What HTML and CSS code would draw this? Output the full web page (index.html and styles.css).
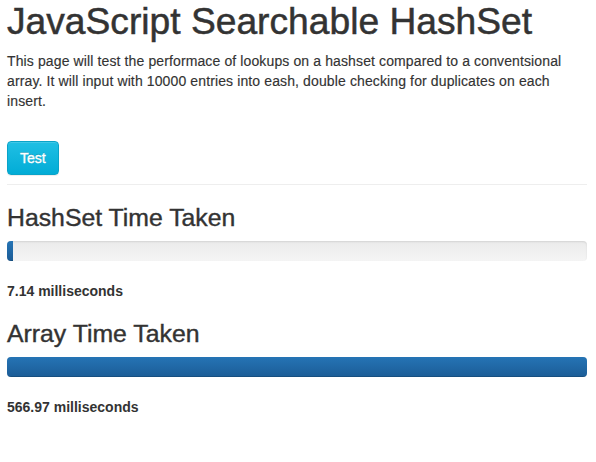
FILE: index.html
```html
<!DOCTYPE html>
<html>
<head>
<meta charset="utf-8">
<title>JavaScript Searchable HashSet</title>
<link rel="stylesheet" href="styles.css">
</head>
<body>
<div class="container">
  <h1 class="title">JavaScript Searchable HashSet</h1>
  <p class="lead-text">This page will test the performace of lookups on a hashset compared to a conventsional array. It will input with 10000 entries into eash, double checking for duplicates on each insert.</p>
  <div class="actions"><button class="btn btn-info" type="button">Test</button></div>
  <hr class="divider">
  <section class="result">
    <h2 class="result-title">HashSet Time Taken</h2>
    <div class="progress"><div class="progress-bar" style="width:1.1%"></div></div>
    <p class="result-time">7.14 milliseconds</p>
  </section>
  <section class="result">
    <h2 class="result-title">Array Time Taken</h2>
    <div class="progress"><div class="progress-bar" style="width:100%"></div></div>
    <p class="result-time">566.97 milliseconds</p>
  </section>
</div>
</body>
</html>
```
FILE: styles.css
```css
html, body {
  margin: 0;
  padding: 0;
  background: #ffffff;
}
body {
  font-family: "Liberation Sans", Arial, Helvetica, sans-serif;
  font-size: 14px;
  line-height: 20px;
  color: #333333;
}
.container {
  padding: 1px 9px 0 7px;
}
.title {
  font-size: 37.2px;
  font-weight: normal;
  line-height: 40px;
  margin: 0 0 10px;
  color: #333333;
  -webkit-text-stroke: 0.5px #333333;
}
.lead-text {
  margin: 0;
  letter-spacing: 0.12px;
  -webkit-text-stroke: 0.15px #333333;
}
.actions {
  margin-top: 30px;
  display: flex;
}
.btn {
  font-family: inherit;
  font-size: 14px;
  line-height: 20px;
  padding: 6px 12px;
  border-radius: 4px;
  cursor: pointer;
}
.btn-info {
  color: #ffffff;
  background: linear-gradient(to bottom, #20bfe4 0%, #02acd6 100%);
  border: 1px solid #0aa3c8;
  text-shadow: 0 -1px 0 rgba(0, 0, 0, 0.2);
  -webkit-text-stroke: 0.35px #ffffff;
  box-shadow: inset 0 1px 0 rgba(255, 255, 255, 0.15), 0 1px 1px rgba(0, 0, 0, 0.075);
}
.divider {
  border: 0;
  border-top: 1px solid #eeeeee;
  margin: 9px 0 20px;
}
.result-title {
  font-size: 24.8px;
  font-weight: normal;
  line-height: 26px;
  margin: 20px 0 10px;
  -webkit-text-stroke: 0.4px #333333;
}
.result:first-of-type .result-title {
  margin-top: 0;
}
.progress {
  height: 20px;
  border-radius: 4px;
  overflow: hidden;
  background: linear-gradient(to bottom, #ebebeb 0%, #f5f5f5 100%);
  box-shadow: inset 0 1px 2px rgba(0, 0, 0, 0.1);
  margin-bottom: 20px;
}
.progress-bar {
  height: 100%;
  background: linear-gradient(to bottom, #2574b5 0%, #1b5c96 100%);
  box-shadow: inset 0 -1px 0 rgba(0, 0, 0, 0.15);
}
.result-time {
  margin: 0;
  font-weight: bold;
}
```
